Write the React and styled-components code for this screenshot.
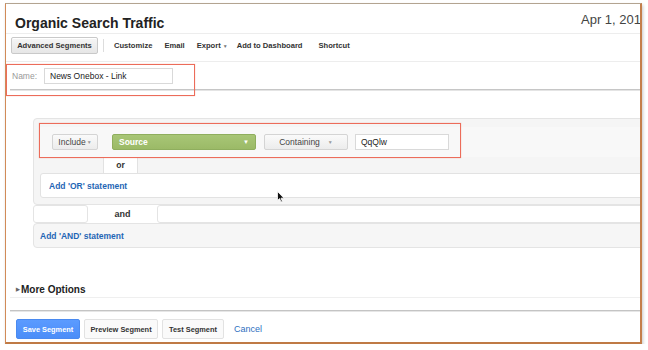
import React from 'react';
import styled, { createGlobalStyle } from 'styled-components';

const GlobalStyle = createGlobalStyle`
  html, body {
    margin: 0;
    padding: 0;
    background: #fff;
  }
  body {
    font-family: "Liberation Sans", Arial, sans-serif;
    color: #333;
  }
`;

const Frame = styled.div`
  position: relative;
  box-sizing: border-box;
  width: 637px;
  height: 341px;
  margin: 3px 0 0 5px;
  border-style: solid;
  border-width: 1px 2px 2px 1px;
  border-color: #b3a491 #c47f4b #bf7a45 #d18b58;
  box-shadow: 1px 2px 3px rgba(0, 0, 0, 0.22);
  background: #fff;
  overflow: hidden;
`;

const Header = styled.div`
  display: flex;
  align-items: flex-start;
  box-sizing: border-box;
  height: 30px;
  border-bottom: 1px solid #ededed;
`;

const Title = styled.h1`
  margin: 0;
  padding: 11px 0 0 9px;
  font-size: 14px;
  line-height: 16px;
  font-weight: bold;
  color: #222;
`;

const DateRange = styled.div`
  margin-left: auto;
  margin-right: -1px;
  padding-top: 8px;
  font-size: 13px;
  line-height: 16px;
  color: #444;
  white-space: nowrap;
`;

const Toolbar = styled.div`
  display: flex;
  align-items: center;
  box-sizing: border-box;
  height: 28px;
  padding: 3px 0 7px 5px;
  border-bottom: 1px solid #ededed;
`;

const ToolButton = styled.button`
  box-sizing: border-box;
  width: 87px;
  height: 17px;
  padding: 0;
  border: 1px solid #c9c9c9;
  border-radius: 2px;
  background: linear-gradient(#f6f6f6, #e6e6e6);
  box-shadow: inset 0 1px 0 #fff;
  font-family: inherit;
  font-size: 7.6px;
  font-weight: bold;
  color: #333;
`;

const Divider = styled.span`
  width: 1px;
  height: 13px;
  margin: 0 10px 0 5px;
  background: #ddd;
`;

const ToolLink = styled.span`
  margin-right: ${p => p.$gap || 12}px;
  font-size: 7.6px;
  font-weight: bold;
  color: #333;
  white-space: nowrap;
`;

const Caret = styled.span`
  margin-left: 2px;
  font-size: 5px;
  color: #777;
`;

const NameRow = styled.div`
  display: flex;
  align-items: center;
  box-sizing: border-box;
  height: 28px;
  margin-left: 4px;
  padding-left: 2px;
  border-bottom: 1px solid #c6c6c6;
  box-shadow: 0 1px 0 #e4e4e4;
`;

const Label = styled.span`
  width: 32px;
  font-size: 8.5px;
  color: #999;
`;

const TextInput = styled.div`
  box-sizing: border-box;
  width: ${p => p.$width}px;
  height: 16px;
  padding-left: 5px;
  border: 1px solid #d9d9d9;
  background: #fff;
  font-size: 8.5px;
  line-height: 14px;
  color: #222;
  white-space: nowrap;
`;

const SegmentArea = styled.div`
  padding: 28px 0 0 27px;
`;

const Panel = styled.div`
  box-sizing: border-box;
  margin-right: -6px;
  padding: 8px 0 6px 6px;
  border: 1px solid #e4e4e4;
  border-radius: 4px;
  background: #f5f5f5;
`;

const ConditionRow = styled.div`
  display: flex;
  align-items: center;
  height: 30px;
  padding-left: 12px;
  background: #f8f8f8;
`;

const Select = styled.div`
  display: flex;
  align-items: center;
  justify-content: ${p => (p.$green ? 'space-between' : 'center')};
  box-sizing: border-box;
  width: ${p => p.$width}px;
  height: 16px;
  margin-right: ${p => p.$gap}px;
  padding: 0 6px;
  border: 1px solid ${p => (p.$green ? '#8fae5e' : '#d4d4d4')};
  border-radius: 2px;
  background: ${p => (p.$green ? 'linear-gradient(#a8c676, #9bba67)' : 'linear-gradient(#fafafa, #ececec)')};
  font-size: 8.5px;
  font-weight: ${p => (p.$green ? 'bold' : 'normal')};
  color: ${p => (p.$green ? '#fff' : '#444')};
  white-space: nowrap;
`;

const Arrow = styled.span`
  margin-left: ${p => p.$offset || 0}px;
  font-size: ${p => p.$size || 6}px;
  color: ${p => p.$color || '#999'};
`;

const OrGap = styled.div`
  height: 16px;
  padding-left: 63px;
`;

const Tab = styled.div`
  box-sizing: border-box;
  width: ${p => p.$width}px;
  height: 100%;
  border-left: 1px solid #e2e2e2;
  border-right: 1px solid #e2e2e2;
  background: #fff;
  font-size: 8.5px;
  font-weight: bold;
  line-height: 16px;
  text-align: center;
  color: #333;
`;

const StatementBox = styled.div`
  display: flex;
  align-items: center;
  box-sizing: border-box;
  height: 25px;
  padding-left: 8px;
  border: 1px solid #e2e2e2;
  border-radius: 3px;
  background: #fff;
`;

const AddLink = styled.span`
  font-size: 8.5px;
  font-weight: bold;
  color: #1f66b5;
`;

const AndRow = styled.div`
  display: flex;
  align-items: center;
  height: 18px;
  margin-right: -6px;
`;

const AndCell = styled.div`
  box-sizing: border-box;
  height: 100%;
  width: ${p => (p.$width ? `${p.$width}px` : 'auto')};
  flex: ${p => (p.$width ? 'none' : '1')};
  border: 1px solid #e4e4e4;
  border-radius: 3px;
  background: #fff;
`;

const AndLabel = styled.span`
  width: 69px;
  font-size: 9px;
  font-weight: bold;
  text-align: center;
  color: #333;
`;

const AndPanel = styled.div`
  display: flex;
  align-items: center;
  box-sizing: border-box;
  height: 25px;
  margin-right: -6px;
  padding-left: 6px;
  border: 1px solid #e4e4e4;
  border-radius: 4px;
  background: #f6f6f6;
`;

const MoreOptions = styled.div`
  display: flex;
  align-items: center;
  box-sizing: border-box;
  height: 17px;
  margin: 33px 0 0 4px;
  padding-left: 6px;
  border-bottom: 1px solid #efefef;
  font-size: 10px;
  font-weight: bold;
  color: #222;
`;

const Triangle = styled.span`
  margin-right: 1px;
  font-size: 5px;
  color: #666;
`;

const Footer = styled.div`
  display: flex;
  align-items: center;
  gap: 4px;
  margin: 12px 0 0 4px;
  padding: 8px 0 0 6px;
  border-top: 1px solid #c4c4c4;
  box-shadow: inset 0 1px 0 #e6e6e6;
`;

const Button = styled.button`
  box-sizing: border-box;
  width: ${p => p.$width}px;
  height: 20px;
  padding: 0;
  border: 1px solid ${p => (p.$primary ? '#4a8af0' : '#e2e2e2')};
  border-radius: 2px;
  background: ${p => (p.$primary ? 'linear-gradient(#5b9bff, #4b8df8)' : '#fafafa')};
  font-family: inherit;
  font-size: 7.4px;
  font-weight: bold;
  color: ${p => (p.$primary ? '#fff' : '#333')};
`;

const Cancel = styled.span`
  margin-left: 6px;
  font-size: 9px;
  color: #2f6fbf;
`;

const Highlight = styled.div`
  position: absolute;
  left: ${p => p.$x}px;
  top: ${p => p.$y}px;
  width: ${p => p.$w}px;
  height: ${p => p.$h}px;
  box-sizing: border-box;
  border: 1.5px solid #ec6c5a;
  box-shadow: 0 0 1px rgba(236, 108, 90, 0.5);
  pointer-events: none;
`;

const Cursor = styled.svg`
  position: absolute;
  left: 271px;
  top: 187px;
`;

export default function App() {
  return (
    <>
      <GlobalStyle />
      <Frame>
        <Header>
          <Title>Organic Search Traffic</Title>
          <DateRange>Apr 1, 201</DateRange>
        </Header>
        <Toolbar>
          <ToolButton>Advanced Segments</ToolButton>
          <Divider />
          <ToolLink>Customize</ToolLink>
          <ToolLink>Email</ToolLink>
          <ToolLink $gap={9}>Export<Caret>▼</Caret></ToolLink>
          <ToolLink $gap={16}>Add to Dashboard</ToolLink>
          <ToolLink>Shortcut</ToolLink>
        </Toolbar>
        <NameRow>
          <Label>Name:</Label>
          <TextInput $width={129}>News Onebox - Link</TextInput>
        </NameRow>
        <SegmentArea>
          <Panel>
            <ConditionRow>
              <Select $width={46} $gap={14}>
                Include<Arrow $offset={1} $size={5}>▼</Arrow>
              </Select>
              <Select $width={144} $gap={8} $green>
                Source<Arrow $color="#fff" $size={6}>▼</Arrow>
              </Select>
              <Select $width={84} $gap={7}>
                Containing<Arrow $offset={8} $size={5}>▼</Arrow>
              </Select>
              <TextInput $width={94}>QqQlw</TextInput>
            </ConditionRow>
            <OrGap>
              <Tab $width={35}>or</Tab>
            </OrGap>
            <StatementBox>
              <AddLink>Add 'OR' statement</AddLink>
            </StatementBox>
          </Panel>
          <AndRow>
            <AndCell $width={55} />
            <AndLabel>and</AndLabel>
            <AndCell />
          </AndRow>
          <AndPanel>
            <AddLink>Add 'AND' statement</AddLink>
          </AndPanel>
        </SegmentArea>
        <MoreOptions>
          <Triangle>▶</Triangle>More Options
        </MoreOptions>
        <Footer>
          <Button $width={64} $primary>Save Segment</Button>
          <Button $width={74}>Preview Segment</Button>
          <Button $width={62}>Test Segment</Button>
          <Cancel>Cancel</Cancel>
        </Footer>
        <Highlight $x={0} $y={60} $w={189} $h={32} />
        <Highlight $x={33} $y={119} $w={422} $h={35} />
        <Cursor width="8" height="12" viewBox="0 0 8 12">
          <path d="M0.5 0.5 L0.5 9.5 L2.6 7.6 L4 11 L5.4 10.4 L4 7.2 L7 7.2 Z" fill="#111" stroke="#fff" strokeWidth="0.8" />
        </Cursor>
      </Frame>
    </>
  );
}
